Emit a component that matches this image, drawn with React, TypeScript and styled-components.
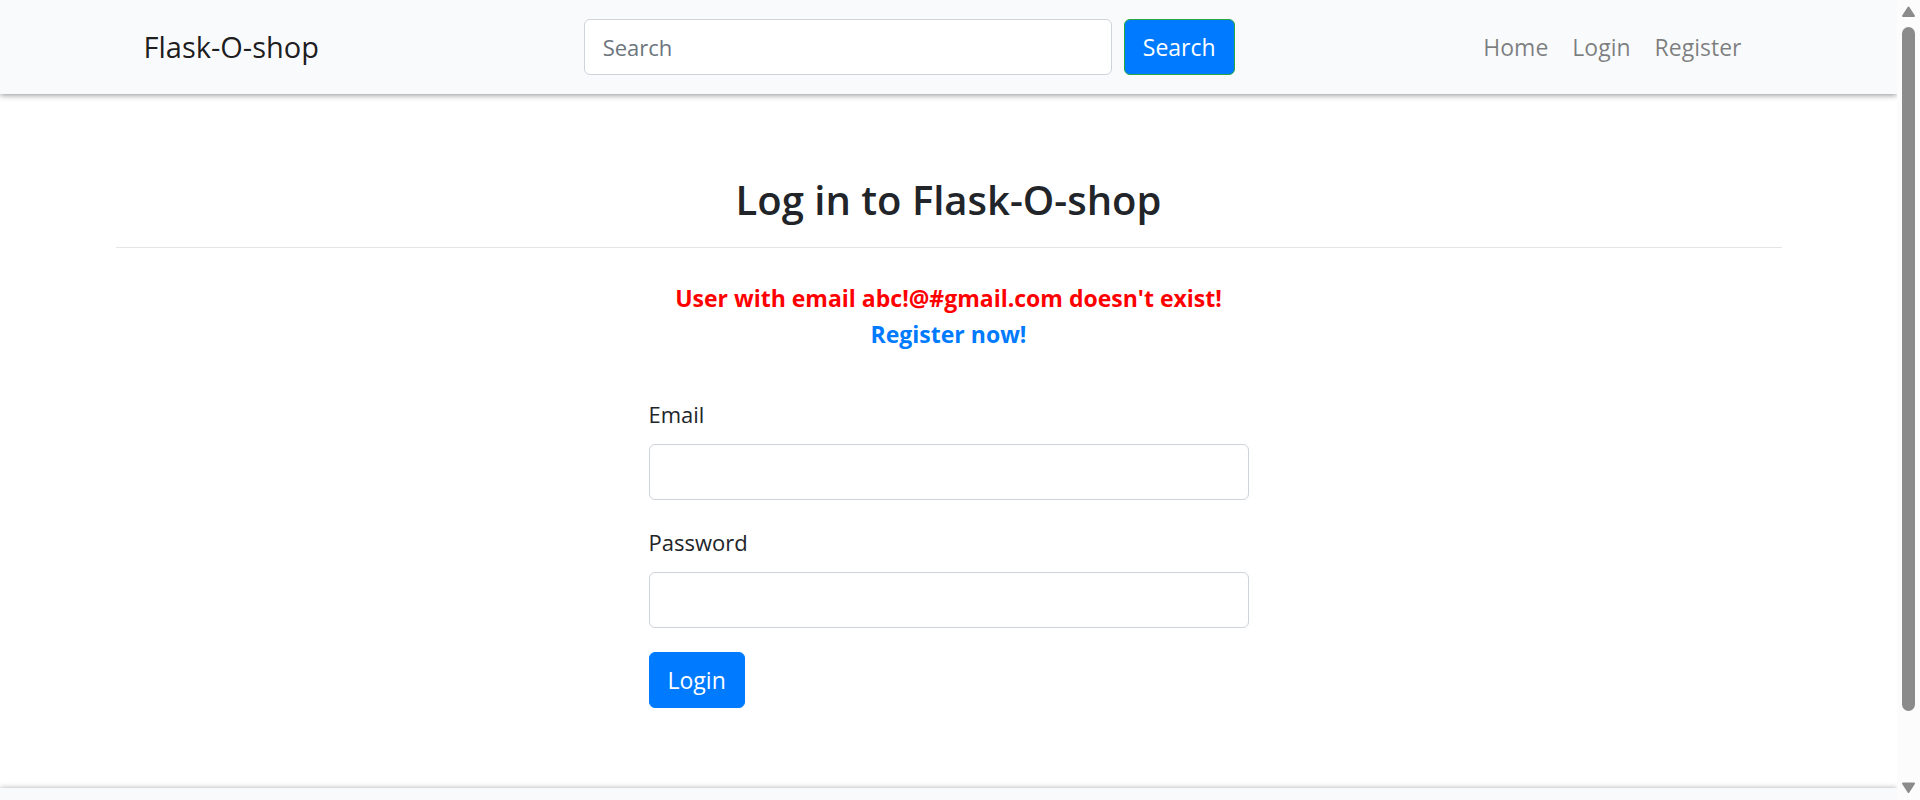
import React from "react";
import styled, { createGlobalStyle } from "styled-components";

const GlobalStyle = createGlobalStyle`
  *, *::before, *::after { box-sizing: border-box; }
  body {
    margin: 0;
    background: #fff;
    color: #212529;
    font-family: "Segoe UI", "Open Sans", "Noto Sans", sans-serif;
    font-size: 22px;
    line-height: 36px;
  }
`;

const Shell = styled.div`
  display: flex;
  height: 100vh;
  overflow: hidden;
`;

const Page = styled.div`
  flex: 1;
  min-width: 0;
  overflow: hidden;
`;

const Navbar = styled.header`
  background: #f8fafc;
  box-shadow: 0 1px 6px rgba(0, 0, 0, 0.45);
  padding: 19px 24px;
`;

const Container = styled.div`
  width: 100%;
  max-width: 1710px;
  margin: 0 auto;
  padding: 0 22px;
`;

const NavRow = styled.div`
  display: flex;
  align-items: center;
  justify-content: space-between;
  max-width: 1610px;
  margin: 0 auto;
`;

const Brand = styled.a`
  color: rgba(0, 0, 0, 0.9);
  font-size: 29px;
  line-height: 44px;
  text-decoration: none;
`;

const SearchForm = styled.form`
  display: flex;
  gap: 12px;
  width: 651px;
  margin-left: 16px;
`;

const TextInput = styled.input`
  width: 100%;
  min-width: 0;
  height: 56px;
  padding: 0 18px;
  border: 1px solid #ced4da;
  border-radius: 6px;
  background: #fff;
  color: #495057;
  font: inherit;

  &::placeholder {
    color: #6c757d;
    opacity: 1;
  }
`;

const Button = styled.button<{ $outline?: string }>`
  height: 56px;
  padding: 0 18px;
  border: 1px solid ${({ $outline }) => $outline ?? "#007bff"};
  border-radius: 6px;
  background: #007bff;
  color: #fff;
  font: inherit;
  font-size: 23px;
  white-space: nowrap;
`;

const NavLinks = styled.nav`
  display: flex;
  gap: 24px;
  padding-right: 12px;
  font-size: 23px;
`;

const NavLink = styled.a`
  color: rgba(0, 0, 0, 0.5);
  text-decoration: none;
`;

const Main = styled.main`
  padding: 80px 0;
`;

const Title = styled.h1`
  margin: 0;
  padding-bottom: 21px;
  border-bottom: 1px solid #e5e5e5;
  font-size: 40px;
  font-weight: 600;
  line-height: 52px;
  text-align: center;
`;

const Alert = styled.p`
  margin: 32px 0 44px;
  color: #f00;
  font-size: 23px;
  font-weight: 700;
  text-align: center;
`;

const AlertLink = styled.a`
  display: block;
  color: #007bff;
  text-decoration: none;
`;

const LoginForm = styled.form`
  max-width: 600px;
  margin: 0 auto;
`;

const Field = styled.div`
  margin-bottom: 24px;
`;

const Label = styled.label`
  display: block;
  margin-bottom: 12px;
`;

const Footer = styled.footer`
  min-height: 120px;
  background: #f8fafc;
  box-shadow: 0 1px 6px rgba(0, 0, 0, 0.45);
`;

const Scrollbar = styled.div`
  display: flex;
  flex: 0 0 23px;
  flex-direction: column;
  align-items: center;
  gap: 9px;
  padding: 6px 0;
  background: #fcfcfc;
`;

const Track = styled.div`
  flex: 1;
  width: 13px;
  padding-bottom: 62px;
`;

const Thumb = styled.div`
  height: 100%;
  border-radius: 7px;
  background: #8b8b8b;
`;

const Arrow = ({ down = false }: { down?: boolean }) => (
  <svg width="15" height="12" viewBox="0 0 15 12">
    <path
      d={down ? "M2 1.5h11L7.5 10z" : "M2 10h11L7.5 1.5z"}
      fill="#8b8b8b"
      stroke="#8b8b8b"
      strokeWidth="2"
      strokeLinejoin="round"
    />
  </svg>
);

export default function App() {
  return (
    <>
      <GlobalStyle />
      <Shell>
        <Page>
          <Navbar>
            <NavRow>
              <Brand href="#">Flask-O-shop</Brand>
              <SearchForm role="search">
                <TextInput type="search" placeholder="Search" aria-label="Search" />
                <Button type="submit" $outline="#28a745">Search</Button>
              </SearchForm>
              <NavLinks>
                <NavLink href="#">Home</NavLink>
                <NavLink href="#">Login</NavLink>
                <NavLink href="#">Register</NavLink>
              </NavLinks>
            </NavRow>
          </Navbar>
          <Main>
            <Container>
              <Title>Log in to Flask-O-shop</Title>
              <Alert role="alert">
                User with email abc!@#gmail.com doesn't exist!
                <AlertLink href="#">Register now!</AlertLink>
              </Alert>
              <LoginForm>
                <Field>
                  <Label htmlFor="email">Email</Label>
                  <TextInput id="email" type="email" />
                </Field>
                <Field>
                  <Label htmlFor="password">Password</Label>
                  <TextInput id="password" type="password" />
                </Field>
                <Button type="submit">Login</Button>
              </LoginForm>
            </Container>
          </Main>
          <Footer />
        </Page>
        <Scrollbar aria-hidden="true">
          <Arrow />
          <Track>
            <Thumb />
          </Track>
          <Arrow down />
        </Scrollbar>
      </Shell>
    </>
  );
}
